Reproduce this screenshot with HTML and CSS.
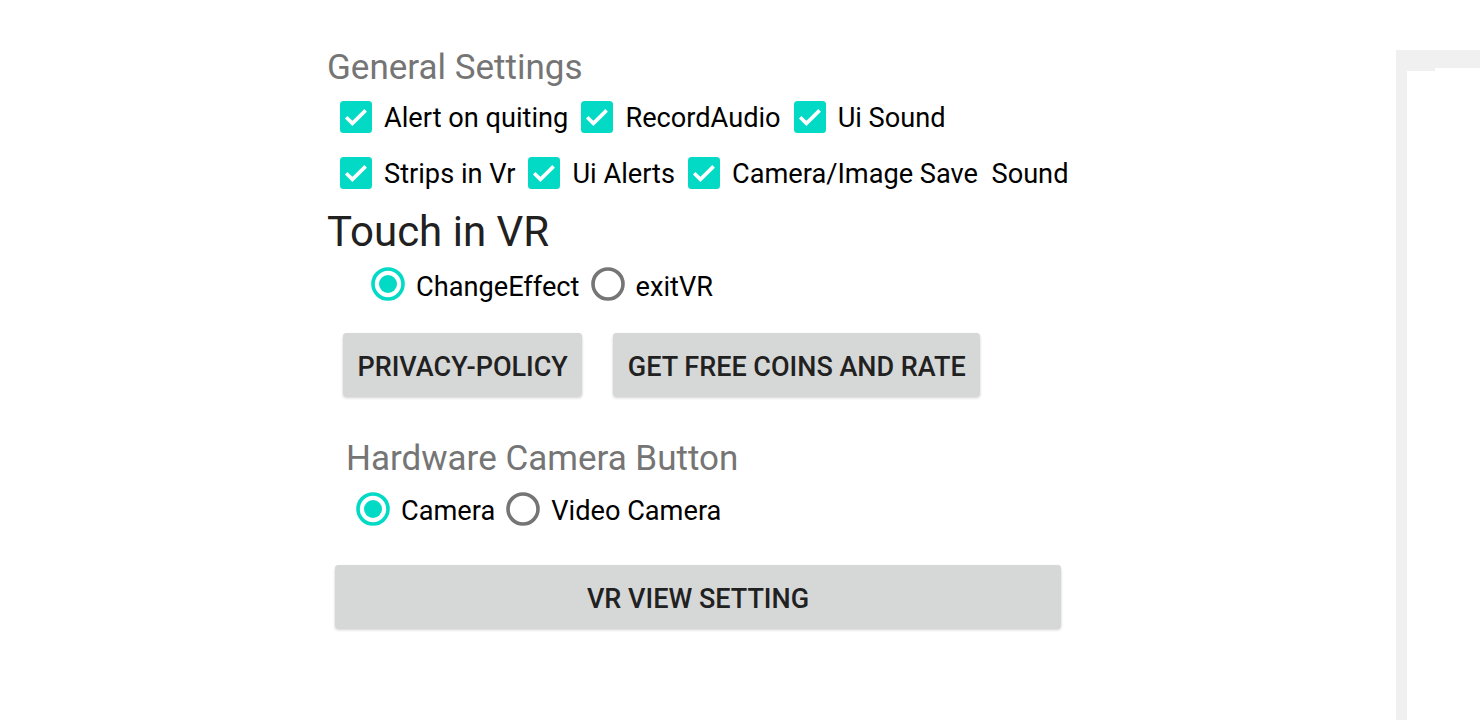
FILE: index.html
```html
<!DOCTYPE html>
<html>
<head>
<meta charset="utf-8">
<link rel="stylesheet" href="styles.css">
</head>
<body>
<div class="page">
  <main class="main">
    <h2 class="heading heading-general">General Settings</h2>
    <div class="check-row row-1">
      <label class="check"><svg class="box" viewBox="0 0 32 32"><rect width="32" height="32" rx="3.5" fill="#03dac5"/><path d="M6.2 16.3 L12.4 22.4 L25.6 9.4" fill="none" stroke="#fff" stroke-width="3.6"/></svg><span>Alert on quiting</span></label>
      <label class="check"><svg class="box" viewBox="0 0 32 32"><rect width="32" height="32" rx="3.5" fill="#03dac5"/><path d="M6.2 16.3 L12.4 22.4 L25.6 9.4" fill="none" stroke="#fff" stroke-width="3.6"/></svg><span>RecordAudio</span></label>
      <label class="check"><svg class="box" viewBox="0 0 32 32"><rect width="32" height="32" rx="3.5" fill="#03dac5"/><path d="M6.2 16.3 L12.4 22.4 L25.6 9.4" fill="none" stroke="#fff" stroke-width="3.6"/></svg><span>Ui Sound</span></label>
    </div>
    <div class="check-row row-2">
      <label class="check"><svg class="box" viewBox="0 0 32 32"><rect width="32" height="32" rx="3.5" fill="#03dac5"/><path d="M6.2 16.3 L12.4 22.4 L25.6 9.4" fill="none" stroke="#fff" stroke-width="3.6"/></svg><span>Strips in Vr</span></label>
      <label class="check"><svg class="box" viewBox="0 0 32 32"><rect width="32" height="32" rx="3.5" fill="#03dac5"/><path d="M6.2 16.3 L12.4 22.4 L25.6 9.4" fill="none" stroke="#fff" stroke-width="3.6"/></svg><span>Ui Alerts</span></label>
      <label class="check"><svg class="box" viewBox="0 0 32 32"><rect width="32" height="32" rx="3.5" fill="#03dac5"/><path d="M6.2 16.3 L12.4 22.4 L25.6 9.4" fill="none" stroke="#fff" stroke-width="3.6"/></svg><span>Camera/Image Save&nbsp; Sound</span></label>
    </div>
    <h2 class="heading heading-touch">Touch in VR</h2>
    <div class="radio-row radio-touch">
      <label class="radio"><svg class="dot" viewBox="0 0 34 34"><circle cx="17" cy="17" r="15" fill="none" stroke="#03dac5" stroke-width="3.6"/><circle cx="17" cy="17" r="9" fill="#03dac5"/></svg><span>ChangeEffect</span></label>
      <label class="radio"><svg class="dot" viewBox="0 0 34 34"><circle cx="17" cy="17" r="15" fill="none" stroke="#757575" stroke-width="3.6"/></svg><span>exitVR</span></label>
    </div>
    <div class="button-row">
      <button class="btn btn-privacy">Privacy-Policy</button>
      <button class="btn btn-coins">Get free coins and rate</button>
    </div>
    <h3 class="heading heading-hw">Hardware Camera Button</h3>
    <div class="radio-row radio-hw">
      <label class="radio"><svg class="dot" viewBox="0 0 34 34"><circle cx="17" cy="17" r="15" fill="none" stroke="#03dac5" stroke-width="3.6"/><circle cx="17" cy="17" r="9" fill="#03dac5"/></svg><span>Camera</span></label>
      <label class="radio"><svg class="dot" viewBox="0 0 34 34"><circle cx="17" cy="17" r="15" fill="none" stroke="#757575" stroke-width="3.6"/></svg><span>Video Camera</span></label>
    </div>
    <button class="btn btn-vr">VR View Setting</button>
  </main>
  <aside class="side">
    <div class="side-inner">
      <div class="side-notch"></div>
    </div>
  </aside>
</div>
</body>
</html>
```

FILE: styles.css
```css
* { box-sizing: border-box; }
html, body {
  margin: 0;
  padding: 0;
  background: #ffffff;
  font-family: Roboto, "Noto Sans", sans-serif;
  height: 720px;
  overflow: hidden;
}
.page {
  display: flex;
  height: 720px;
}
.main {
  width: 1396px;
  flex: none;
  display: flex;
  flex-direction: column;
  align-items: flex-start;
  padding-left: 327px;
  padding-top: 47px;
}
.heading {
  margin: 0;
  font-weight: 400;
  line-height: 1.172;
}
.heading-general {
  font-size: 35px;
  color: #757575;
}
.heading-touch {
  font-size: 42px;
  color: #212121;
  margin-top: 18px;
}
.heading-hw {
  font-size: 35px;
  color: #757575;
  margin-top: 42px;
  margin-left: 19px;
}
.check-row {
  display: flex;
  align-items: center;
  gap: 13px;
  margin-left: 13px;
  font-size: 27.2px;
  color: #000;
}
.row-1 { margin-top: 13px; }
.row-2 { margin-top: 24px; }
.check {
  display: flex;
  align-items: center;
  gap: 12px;
  height: 32px;
}
.check span {
  line-height: 32px;
  padding-top: 2px;
}
.box {
  width: 32px;
  height: 32px;
  flex: none;
}
.radio-row {
  display: flex;
  align-items: center;
  gap: 11px;
  font-size: 27.2px;
  color: #000;
}
.radio-touch { margin-left: 44px; margin-top: 11px; }
.radio-hw { margin-left: 29px; margin-top: 13px; }
.radio {
  display: flex;
  align-items: center;
  gap: 11px;
  height: 34px;
}
.radio span {
  line-height: 34px;
  padding-top: 5px;
}
.radio-hw .radio span {
  padding-top: 3px;
}
.dot {
  width: 34px;
  height: 34px;
  flex: none;
}
.button-row {
  display: flex;
  gap: 31px;
  margin-top: 32px;
  margin-left: 16px;
}
.btn {
  font-family: Roboto, "Noto Sans", sans-serif;
  font-weight: 500;
  font-size: 27px;
  line-height: 32px;
  text-transform: uppercase;
  color: #212121;
  background: #d6d7d7;
  border: none;
  border-radius: 3.5px;
  height: 63px;
  padding: 5px 14.5px 0;
  box-shadow: 0 2px 3px rgba(0,0,0,0.18), 0 0 1px rgba(0,0,0,0.08);
  letter-spacing: 0;
}
.btn-vr {
  width: 726px;
  margin-top: 39px;
  margin-left: 8px;
}
.side {
  flex: 1;
  margin-top: 50px;
  background: #f0f0f0;
  padding: 18px 0 0 11px;
  display: flex;
}
.side-inner {
  flex: 1;
  background: #ffffff;
}
.side-notch {
  width: 28px;
  height: 3px;
  background: #f0f0f0;
}
```
